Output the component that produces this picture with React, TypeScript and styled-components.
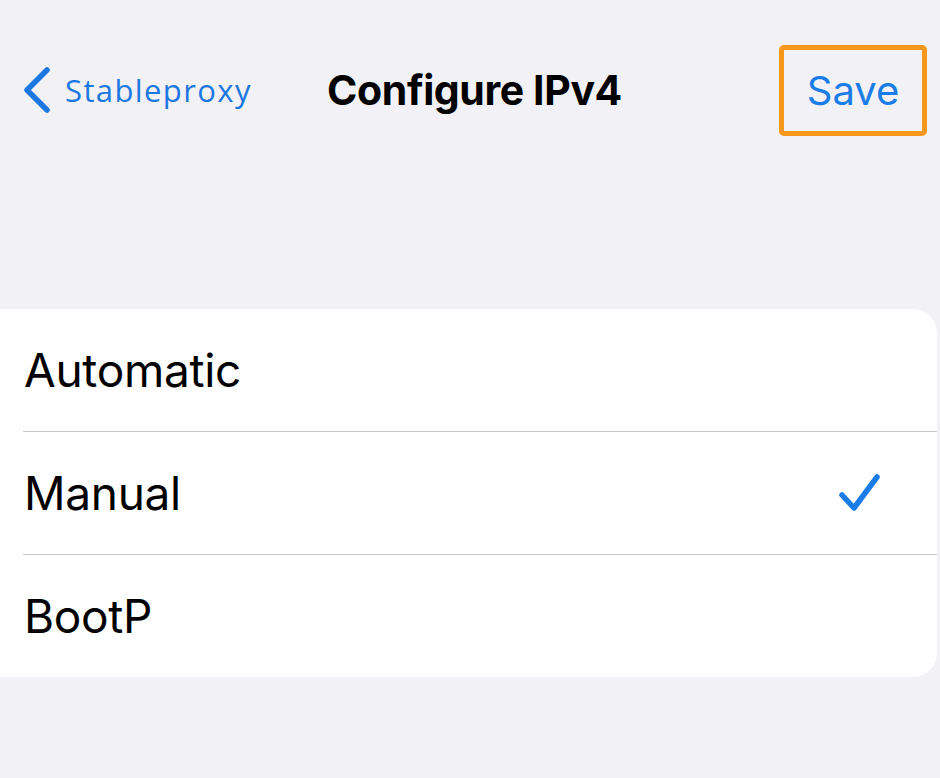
import React from "react";
import styled, { createGlobalStyle } from "styled-components";

const Global = createGlobalStyle`
  html, body { margin: 0; padding: 0; background: #f1f1f6; }
  body { font-family: Inter, "Liberation Sans", sans-serif; -webkit-font-smoothing: antialiased; }
`;

const Page = styled.div`
  width: 940px;
  height: 778px;
  background: #f1f1f6;
  display: flex;
  flex-direction: column;
`;

const NavBar = styled.header`
  height: 180px;
  display: grid;
  grid-template-columns: 1fr auto 1fr;
  align-items: center;
  padding: 0 13px 0 22px;
`;

const BackButton = styled.button`
  justify-self: start;
  display: flex;
  align-items: center;
  gap: 13px;
  background: none;
  border: none;
  padding: 0;
  color: #1c78e0;
  font-family: "Open Sans", Lato, sans-serif;
  font-size: 31px;
  letter-spacing: 1.4px;
  cursor: pointer;
`;

const Title = styled.h1`
  margin: 0;
  font-size: 41px;
  font-weight: 700;
  color: #000;
  letter-spacing: -0.4px;
`;

const SaveButton = styled.button`
  justify-self: end;
  width: 148px;
  height: 91px;
  box-sizing: border-box;
  border: 5px solid #f7981d;
  border-radius: 5px;
  background: transparent;
  color: #1a7ce6;
  font-family: Inter, "Liberation Sans", sans-serif;
  font-size: 40px;
  font-weight: 400;
  padding: 0;
  cursor: pointer;
`;

const Card = styled.ul`
  list-style: none;
  margin: 129px 3px 0 0;
  padding: 0;
  background: #fff;
  border-radius: 0 24px 24px 0;
  overflow: hidden;
`;

const Row = styled.li`
  height: 122px;
  display: flex;
  align-items: center;
  justify-content: space-between;
  padding: 0 55px 0 24px;
  position: relative;
  font-size: 46px;
  letter-spacing: -0.3px;
  color: #000;
  & + &::before {
    content: "";
    position: absolute;
    top: 0;
    left: 23px;
    right: 0;
    height: 1px;
    background: #c8c8cc;
  }
  & + & { height: 123px; }
`;

const Check = () => (
  <svg width="44" height="44" viewBox="0 0 44 44" fill="none">
    <path d="M4 24 L16 37 L39 6" stroke="#1a7ce6" strokeWidth="5.5" strokeLinecap="round" strokeLinejoin="round" />
  </svg>
);

const Chevron = () => (
  <svg width="30" height="48" viewBox="0 0 30 48" fill="none">
    <path d="M25 4 L5 24 L25 44" stroke="#1c78e0" strokeWidth="5.5" strokeLinecap="round" strokeLinejoin="round" />
  </svg>
);

const options = ["Automatic", "Manual", "BootP"];

export default function App() {
  const selected = "Manual";
  return (
    <Page>
      <Global />
      <NavBar>
        <BackButton>
          <Chevron />
          Stableproxy
        </BackButton>
        <Title>Configure IPv4</Title>
        <SaveButton>Save</SaveButton>
      </NavBar>
      <Card>
        {options.map((o) => (
          <Row key={o}>
            <span>{o}</span>
            {o === selected && <Check />}
          </Row>
        ))}
      </Card>
    </Page>
  );
}
